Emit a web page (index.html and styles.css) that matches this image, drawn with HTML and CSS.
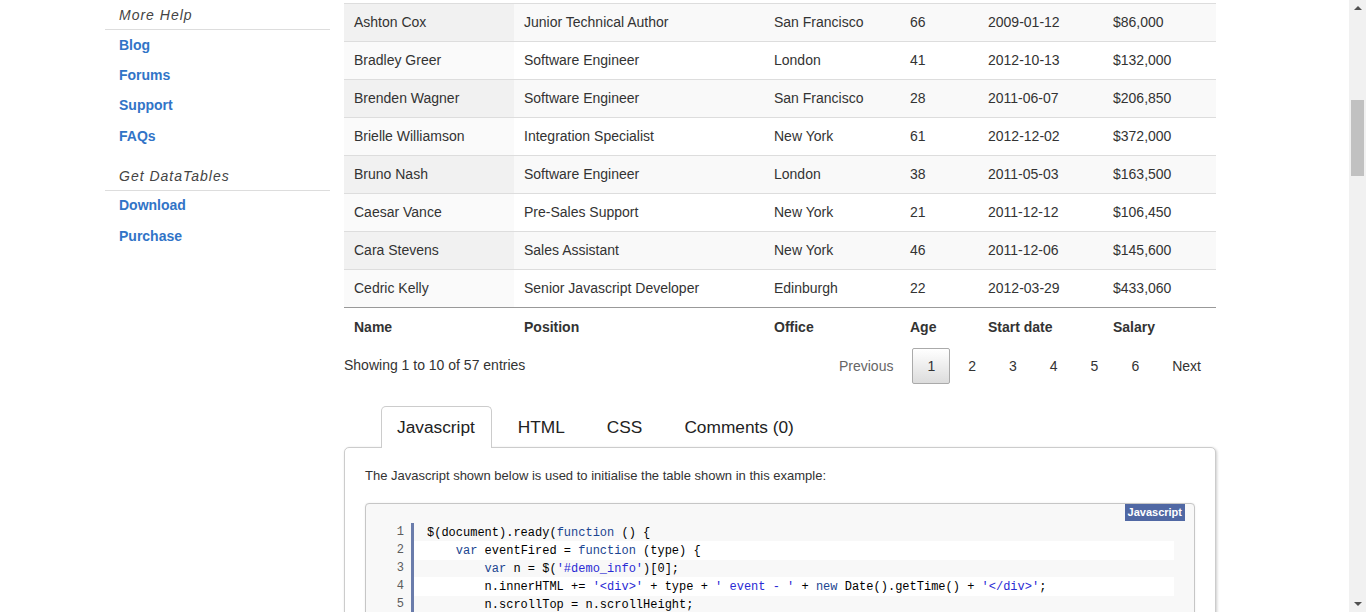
FILE: index.html
```html
<!DOCTYPE html>
<html>
<head>
<meta charset="utf-8">
<link rel="stylesheet" href="styles.css">
</head>
<body>
<div class="page">
  <aside class="sidebar">
    <div class="side-head">More Help</div>
    <ul class="side-links">
      <li><a href="#">Blog</a></li>
      <li><a href="#">Forums</a></li>
      <li><a href="#">Support</a></li>
      <li><a href="#">FAQs</a></li>
    </ul>
    <div class="side-head side-head-gap">Get DataTables</div>
    <ul class="side-links side-links-wide">
      <li><a href="#">Download</a></li>
      <li><a href="#">Purchase</a></li>
    </ul>
  </aside>

  <main class="content">
    <table class="dt">
      <colgroup>
        <col class="c1"><col class="c2"><col class="c3"><col class="c4"><col class="c5"><col class="c6">
      </colgroup>
      <tbody>
        <tr class="odd"><td class="sort">Ashton Cox</td><td>Junior Technical Author</td><td>San Francisco</td><td>66</td><td>2009-01-12</td><td>$86,000</td></tr>
        <tr class="even"><td class="sort">Bradley Greer</td><td>Software Engineer</td><td>London</td><td>41</td><td>2012-10-13</td><td>$132,000</td></tr>
        <tr class="odd"><td class="sort">Brenden Wagner</td><td>Software Engineer</td><td>San Francisco</td><td>28</td><td>2011-06-07</td><td>$206,850</td></tr>
        <tr class="even"><td class="sort">Brielle Williamson</td><td>Integration Specialist</td><td>New York</td><td>61</td><td>2012-12-02</td><td>$372,000</td></tr>
        <tr class="odd"><td class="sort">Bruno Nash</td><td>Software Engineer</td><td>London</td><td>38</td><td>2011-05-03</td><td>$163,500</td></tr>
        <tr class="even"><td class="sort">Caesar Vance</td><td>Pre-Sales Support</td><td>New York</td><td>21</td><td>2011-12-12</td><td>$106,450</td></tr>
        <tr class="odd"><td class="sort">Cara Stevens</td><td>Sales Assistant</td><td>New York</td><td>46</td><td>2011-12-06</td><td>$145,600</td></tr>
        <tr class="even"><td class="sort">Cedric Kelly</td><td>Senior Javascript Developer</td><td>Edinburgh</td><td>22</td><td>2012-03-29</td><td>$433,060</td></tr>
      </tbody>
      <tfoot>
        <tr><th>Name</th><th>Position</th><th>Office</th><th>Age</th><th>Start date</th><th>Salary</th></tr>
      </tfoot>
    </table>

    <div class="dt-footer">
      <div class="dt-info">Showing 1 to 10 of 57 entries</div>
      <div class="dt-paginate">
        <span class="pbtn disabled">Previous</span>
        <span class="pbtn current">1</span>
        <span class="pbtn">2</span>
        <span class="pbtn">3</span>
        <span class="pbtn">4</span>
        <span class="pbtn">5</span>
        <span class="pbtn">6</span>
        <span class="pbtn">Next</span>
      </div>
    </div>

    <ul class="tabs">
      <li class="tab active">Javascript</li>
      <li class="tab">HTML</li>
      <li class="tab">CSS</li>
      <li class="tab">Comments (0)</li>
    </ul>
    <div class="panel">
      <p class="panel-intro">The Javascript shown below is used to initialise the table shown in this example:</p>
      <div class="code">
        <span class="code-label">Javascript</span>
        <div class="line"><span class="ln">1</span><span class="src">$(document).ready(<span class="kw">function</span> () {</span></div>
        <div class="line alt"><span class="ln">2</span><span class="src">    <span class="kw">var</span> eventFired = <span class="kw">function</span> (type) {</span></div>
        <div class="line"><span class="ln">3</span><span class="src">        <span class="kw">var</span> n = $(<span class="str">'#demo_info'</span>)[0];</span></div>
        <div class="line alt"><span class="ln">4</span><span class="src">        n.innerHTML += <span class="str">'&lt;div&gt;'</span> + type + <span class="str">' event - '</span> + <span class="kw">new</span> Date().getTime() + <span class="str">'&lt;/div&gt;'</span>;</span></div>
        <div class="line"><span class="ln">5</span><span class="src">        n.scrollTop = n.scrollHeight;</span></div>
      </div>
    </div>
  </main>
</div>

<div class="scrollbar">
  <span class="sb-arrow sb-up"></span>
  <span class="sb-thumb"></span>
  <span class="sb-arrow sb-down"></span>
</div>
</body>
</html>
```

FILE: styles.css
```css
html, body {
  margin: 0;
  padding: 0;
  height: 100%;
  overflow: hidden;
  background: #fff;
}

body {
  font-family: "Liberation Sans", Arial, sans-serif;
  font-size: 14px;
  color: #333;
}

.page {
  display: flex;
  align-items: flex-start;
  width: 1349px;
  padding-left: 105px;
  box-sizing: border-box;
}

/* Sidebar */
.sidebar {
  width: 225px;
  flex: none;
}

.side-head {
  font-style: italic;
  letter-spacing: 1px;
  color: #444;
  font-size: 14px;
  line-height: 17px;
  padding: 7px 14px 5px;
  border-bottom: 1px solid #ddd;
}

.side-head-gap {
  margin-top: 10px;
}

.side-links {
  list-style: none;
  margin: 0;
  padding: 0;
}

.side-links li {
  line-height: 30px;
  padding-left: 14px;
}

.side-links li:last-child {
  padding-top: 1px;
}

.side-links-wide {
  margin-top: -1px;
}

.side-links-wide li,
.side-links-wide li:last-child {
  line-height: 31px;
  padding-top: 0;
}

.side-links a {
  color: #3174c7;
  font-weight: bold;
  text-decoration: none;
}

/* Main */
.content {
  width: 872px;
  margin-left: 14px;
  padding-top: 3px;
  flex: none;
}

.dt {
  width: 872px;
  border-collapse: collapse;
  table-layout: fixed;
}

.dt .c1 { width: 170px; }
.dt .c2 { width: 250px; }
.dt .c3 { width: 136px; }
.dt .c4 { width: 78px; }
.dt .c5 { width: 125px; }
.dt .c6 { width: 113px; }

.dt td {
  padding: 10px;
  line-height: 17px;
  border-top: 1px solid #ddd;
  text-align: left;
  white-space: nowrap;
}

.dt tr.odd td { background: #f9f9f9; }
.dt tr.odd td.sort { background: #f1f1f1; }
.dt tr.even td { background: #fff; }
.dt tr.even td.sort { background: #fafafa; }

.dt tfoot th {
  padding: 11px 10px 5px;
  line-height: 17px;
  border-top: 1px solid #999;
  text-align: left;
  font-weight: bold;
}

.dt-footer {
  display: flex;
  justify-content: space-between;
  align-items: flex-start;
  margin-top: 7px;
}

.dt-info {
  padding-top: 7px;
  line-height: 20px;
}

.dt-paginate {
  display: flex;
  gap: 3px;
}

.pbtn {
  display: block;
  padding: 7px 14px;
  line-height: 20px;
  border: 1px solid transparent;
  border-radius: 2px;
  color: #333;
}

.pbtn.disabled {
  color: #666;
  padding-left: 16px;
  padding-right: 15px;
}

.pbtn.current {
  border-color: #aaa;
  background: linear-gradient(to bottom, #fff 0%, #dcdcdc 100%);
}

/* Tabs */
.tabs {
  list-style: none;
  display: flex;
  align-items: flex-end;
  margin: 22px 0 0;
  padding: 0 0 0 37px;
}

.tab {
  font-size: 17.3px;
  line-height: 20px;
  padding: 10px 15px;
  margin-right: 10px;
  border: 1px solid transparent;
  border-bottom: 0;
  border-radius: 5px 5px 0 0;
  color: #222;
}

.tab.active {
  position: relative;
  z-index: 1;
  background: #fff;
  border-color: #ccc;
  padding-bottom: 11px;
  margin-bottom: -1px;
  padding-right: 16px;
}

.panel {
  border: 1px solid #ccc;
  border-radius: 5px;
  box-shadow: 1px 1px 3px rgba(0, 0, 0, 0.2);
  padding: 20px;
  background: #fff;
}

.panel-intro {
  margin: 0 0 19px;
  font-size: 13px;
  line-height: 16px;
  color: #333;
}

.code {
  position: relative;
  border: 1px solid #c6c6c6;
  border-radius: 4px;
  background: #f8f8f8;
  padding: 19px 20px 19px 0;
  box-shadow: 0 0 2px rgba(0, 0, 0, 0.08);
  font-family: "Liberation Mono", "DejaVu Sans Mono", monospace;
  font-size: 12px;
}

.code-label {
  position: absolute;
  top: 0;
  right: 9px;
  background: #5068a4;
  color: #fff;
  font-family: "Liberation Sans", Arial, sans-serif;
  font-size: 11px;
  font-weight: bold;
  line-height: 13px;
  padding: 2px 3px 2px;
}

.line {
  display: flex;
  line-height: 18px;
}

.ln {
  flex: none;
  width: 45px;
  box-sizing: border-box;
  padding-right: 7px;
  text-align: right;
  color: #5c5c5c;
}

.src {
  flex: 1;
  white-space: pre;
  border-left: 3px solid #6a7cab;
  padding-left: 13px;
  padding-top: 1px;
  margin-bottom: -1px;
  color: #000;
}

.line.alt .src {
  background: #fff;
}

.kw { color: #1b4591; }
.str { color: #2a2ad4; }

/* Scrollbar overlay */
.scrollbar {
  position: fixed;
  top: 0;
  right: 0;
  width: 17px;
  height: 100%;
  background: #f1f1f1;
}

.sb-thumb {
  position: absolute;
  left: 2px;
  top: 100px;
  width: 13px;
  height: 76px;
  background: #c1c1c1;
}

.sb-arrow {
  position: absolute;
  left: 5px;
  width: 0;
  height: 0;
  border-left: 4px solid transparent;
  border-right: 4px solid transparent;
}

.sb-up {
  top: 6px;
  border-bottom: 4px solid #505050;
}

.sb-down {
  bottom: 6px;
  border-top: 4px solid #505050;
}
```
